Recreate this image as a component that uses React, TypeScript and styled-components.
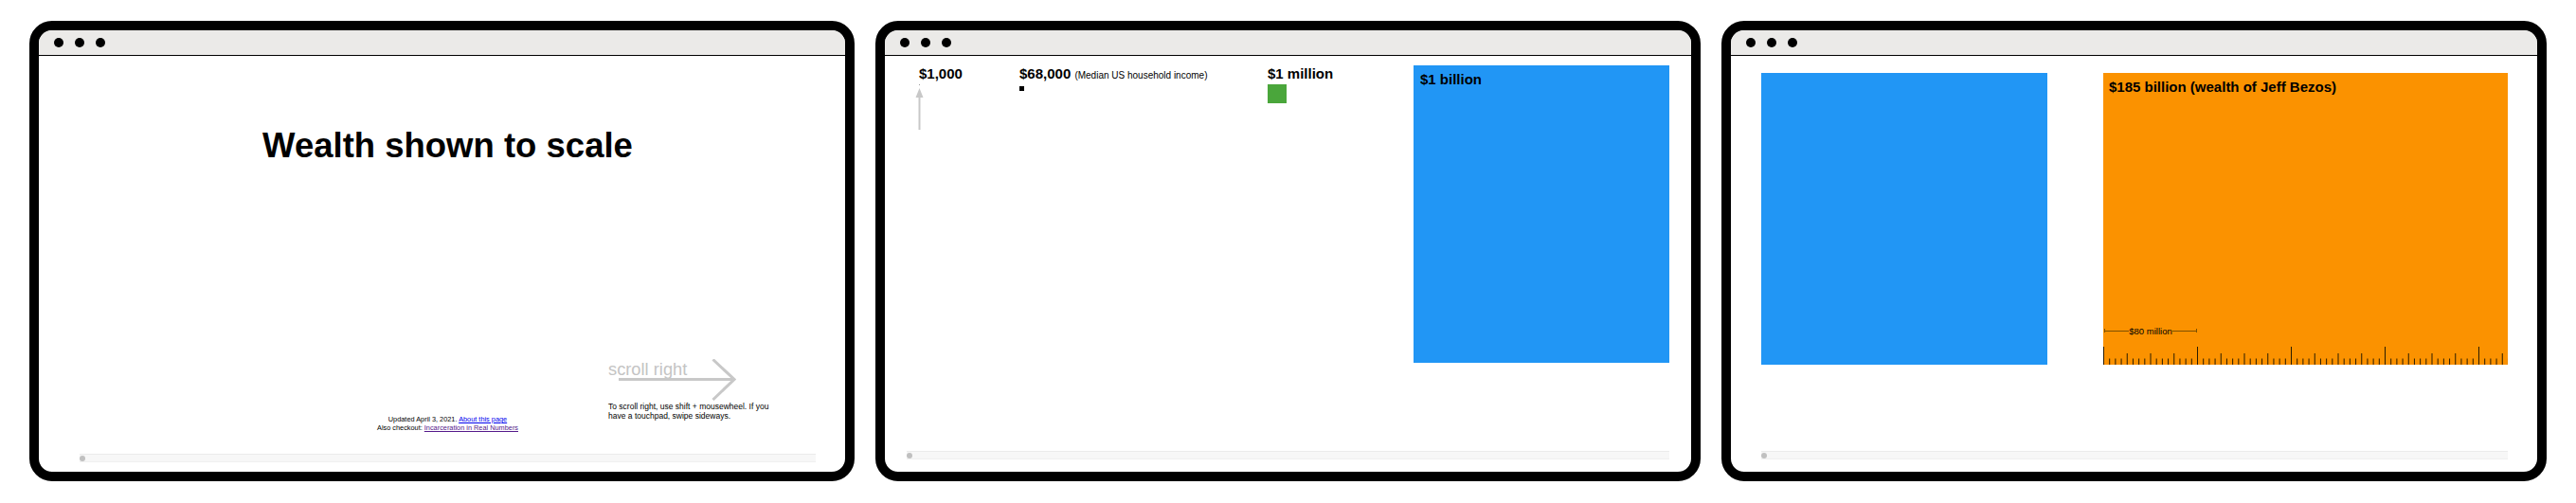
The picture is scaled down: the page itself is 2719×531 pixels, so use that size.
import React from 'react';
import styled, { createGlobalStyle } from 'styled-components';

const Global = createGlobalStyle`
  * { box-sizing: border-box; }
  html, body { margin: 0; padding: 0; background: #fff; }
  body { font-family: "Liberation Sans", Arial, sans-serif; color: #000; }
`;

const Page = styled.div`
  display: grid;
  grid-template-columns: repeat(3, 871px);
  column-gap: 22px;
  padding: 22px 31px 23px;
  height: 531px;
`;

const Frame = styled.div`
  display: flex;
  flex-direction: column;
  border: 10px solid #000;
  border-radius: 24px;
  overflow: hidden;
  background: #fff;
`;

const TitleBar = styled.div`
  display: flex;
  align-items: center;
  gap: 12px;
  flex: none;
  height: 27px;
  padding-left: 16px;
  background: #ebeae8;
  border-bottom: 1px solid #000;
`;

const Dot = styled.span`
  width: 10px;
  height: 10px;
  border-radius: 50%;
  background: #000;
`;

const Viewport = styled.div<{ $left: number; $right: number; $bottom: number }>`
  display: flex;
  flex-direction: column;
  flex: 1;
  min-height: 0;
  padding: 0 ${(p) => p.$right}px ${(p) => p.$bottom}px ${(p) => p.$left}px;
`;

const Scrollbar = styled.div`
  flex: none;
  display: flex;
  align-items: center;
  height: 9px;
  background: #f7f7f7;
  border-top: 1px solid #ebebeb;
  border-bottom: 1px solid #f0f0f0;
`;

const Thumb = styled.span`
  width: 6px;
  height: 6px;
  border-radius: 50%;
  background: #c0c0c0;
`;

const Title = styled.h1`
  margin: 73px 0 0;
  font-size: 36.5px;
  line-height: 44px;
  font-weight: 700;
  text-align: center;
`;

const BottomRow = styled.div`
  display: flex;
  align-items: flex-end;
  margin: auto 0 23px;
`;

const Footer = styled.div`
  flex: none;
  width: 181px;
  margin-left: 298px;
  font-size: 7.35px;
  line-height: 9px;
  text-align: center;
`;

const PageLink = styled.a<{ $visited?: boolean }>`
  color: ${(p) => (p.$visited ? '#551a8b' : '#0000ee')};
  text-decoration: underline;
`;

const Hint = styled.div`
  flex: none;
  width: 180px;
  margin: 0 0 12px 79px;
`;

const HintArrow = styled.div`
  position: relative;
  height: 43px;
  padding-top: 1px;
  font-size: 18.3px;
  line-height: 20px;
  color: #c4c4c4;
`;

const ArrowOverlay = styled.svg`
  position: absolute;
  left: 11px;
  top: 0;
`;

const HintText = styled.p`
  margin: 2px 0 0;
  font-size: 8.5px;
  line-height: 10px;
  white-space: nowrap;
`;

const ScaleRow = styled.div`
  display: flex;
  align-items: flex-start;
  flex: 1;
  padding-top: 10px;
`;

const Column = styled.div<{ $width: number; $indent?: number }>`
  flex: none;
  width: ${(p) => p.$width}px;
  margin-left: ${(p) => p.$indent ?? 0}px;
`;

const Label = styled.div`
  font-size: 15px;
  line-height: 18px;
  font-weight: 700;
  white-space: nowrap;
`;

const Note = styled.span`
  font-size: 10px;
  font-weight: 400;
`;

const Swatch = styled.div<{ $size: number; $color: string }>`
  width: ${(p) => p.$size}px;
  height: ${(p) => p.$size}px;
  margin-top: 2px;
  background: ${(p) => p.$color};
`;

const PointerArrow = styled.svg`
  display: block;
  margin: 2px 0 0 -4px;
`;

const Block = styled.div<{ $color: string }>`
  display: flex;
  flex-direction: column;
  background: ${(p) => p.$color};
`;

const BillionBlock = styled(Block)`
  flex: 1;
  height: 314px;
  padding: 6px 7px;
`;

const WealthRow = styled.div`
  display: flex;
  gap: 59px;
  padding-top: 18px;
  flex: 1;
  align-items: flex-start;
`;

const PlainBlock = styled(Block)`
  width: 302px;
  height: 308px;
`;

const BezosBlock = styled(Block)`
  flex: 1;
  height: 308px;
  padding-top: 6px;
`;

const BezosLabel = styled(Label)`
  padding-left: 6px;
`;

const Marker = styled.div`
  display: flex;
  align-items: center;
  width: 98px;
  height: 11px;
  margin: auto 0 11px 1px;
  font-size: 9.5px;
  line-height: 11px;
  white-space: nowrap;
`;

const MarkerLine = styled.span<{ $side: 'left' | 'right' }>`
  flex: 1;
  height: 4px;
  margin-top: -1px;
  background: linear-gradient(#7d5000, #7d5000) center / 100% 1px no-repeat;
  border-${(p) => p.$side}: 1px solid #7d5000;
`;

const Ruler = styled.svg`
  display: block;
  flex: none;
`;

const RULER_WIDTH = 427;
const RULER_HEIGHT = 19;
const TICK_GAP = 99 / 16;

const ticks = Array.from({ length: Math.floor(RULER_WIDTH / TICK_GAP) + 1 }, (_, i) => {
  const height = i % 16 === 0 ? 19 : i % 4 === 0 ? 12 : 6.5;
  return { x: 0.5 + i * TICK_GAP, height };
});

const Window = ({ children, left, right, bottom }: { children: React.ReactNode; left: number; right: number; bottom: number }) => (
  <Frame>
    <TitleBar>
      <Dot />
      <Dot />
      <Dot />
    </TitleBar>
    <Viewport $left={left} $right={right} $bottom={bottom}>
      {children}
      <Scrollbar>
        <Thumb />
      </Scrollbar>
    </Viewport>
  </Frame>
);

const App = () => {
  return (
    <Page>
      <Global />
      <Window left={43} right={31} bottom={10}>
        <Title>Wealth shown to scale</Title>
        <BottomRow>
          <Footer>
            Updated April 3, 2021. <PageLink href="#">About this page</PageLink>
            <br />
            Also checkout: <PageLink href="#" $visited>Incarceration in Real Numbers</PageLink>
          </Footer>
          <Hint>
            <HintArrow>
              scroll right
              <ArrowOverlay width="124" height="44" viewBox="0 0 124 44" fill="none" stroke="#c8c8c8" strokeWidth="3">
                <path d="M0 21.5H121" />
                <path d="M99.5 0.5L122 21.5L99.5 43" />
              </ArrowOverlay>
            </HintArrow>
            <HintText>
              To scroll right, use shift + mousewheel. If you
              <br />
              have a touchpad, swipe sideways.
            </HintText>
          </Hint>
        </BottomRow>
      </Window>

      <Window left={23} right={23} bottom={13}>
        <ScaleRow>
          <Column $width={106} $indent={13}>
            <Label>$1,000</Label>
            <PointerArrow width="9" height="48" viewBox="0 0 9 48">
              <rect x="4" y="0" width="1" height="1" fill="#999" />
              <path d="M4.5 4L8.5 14H5.5V48H3.5V14H0.5Z" fill="#c8c8c8" />
            </PointerArrow>
          </Column>
          <Column $width={262}>
            <Label>
              $68,000 <Note>(Median US household income)</Note>
            </Label>
            <Swatch $size={5} $color="#000" />
          </Column>
          <Column $width={154}>
            <Label>$1 million</Label>
            <Swatch $size={20} $color="#4aa63b" />
          </Column>
          <BillionBlock $color="#2196f5">
            <Label>$1 billion</Label>
          </BillionBlock>
        </ScaleRow>
      </Window>

      <Window left={32} right={31} bottom={13}>
        <WealthRow>
          <PlainBlock $color="#2196f5" />
          <BezosBlock $color="#fb9200">
            <BezosLabel>$185 billion (wealth of Jeff Bezos)</BezosLabel>
            <Marker>
              <MarkerLine $side="left" />
              $80 million
              <MarkerLine $side="right" />
            </Marker>
            <Ruler width={RULER_WIDTH} height={RULER_HEIGHT} viewBox={`0 0 ${RULER_WIDTH} ${RULER_HEIGHT}`}>
              {ticks.map((t) => (
                <line key={t.x} x1={t.x} x2={t.x} y1={RULER_HEIGHT - t.height} y2={RULER_HEIGHT} stroke="#2a1c00" strokeWidth="1" />
              ))}
            </Ruler>
          </BezosBlock>
        </WealthRow>
      </Window>
    </Page>
  );
};

export default App;
